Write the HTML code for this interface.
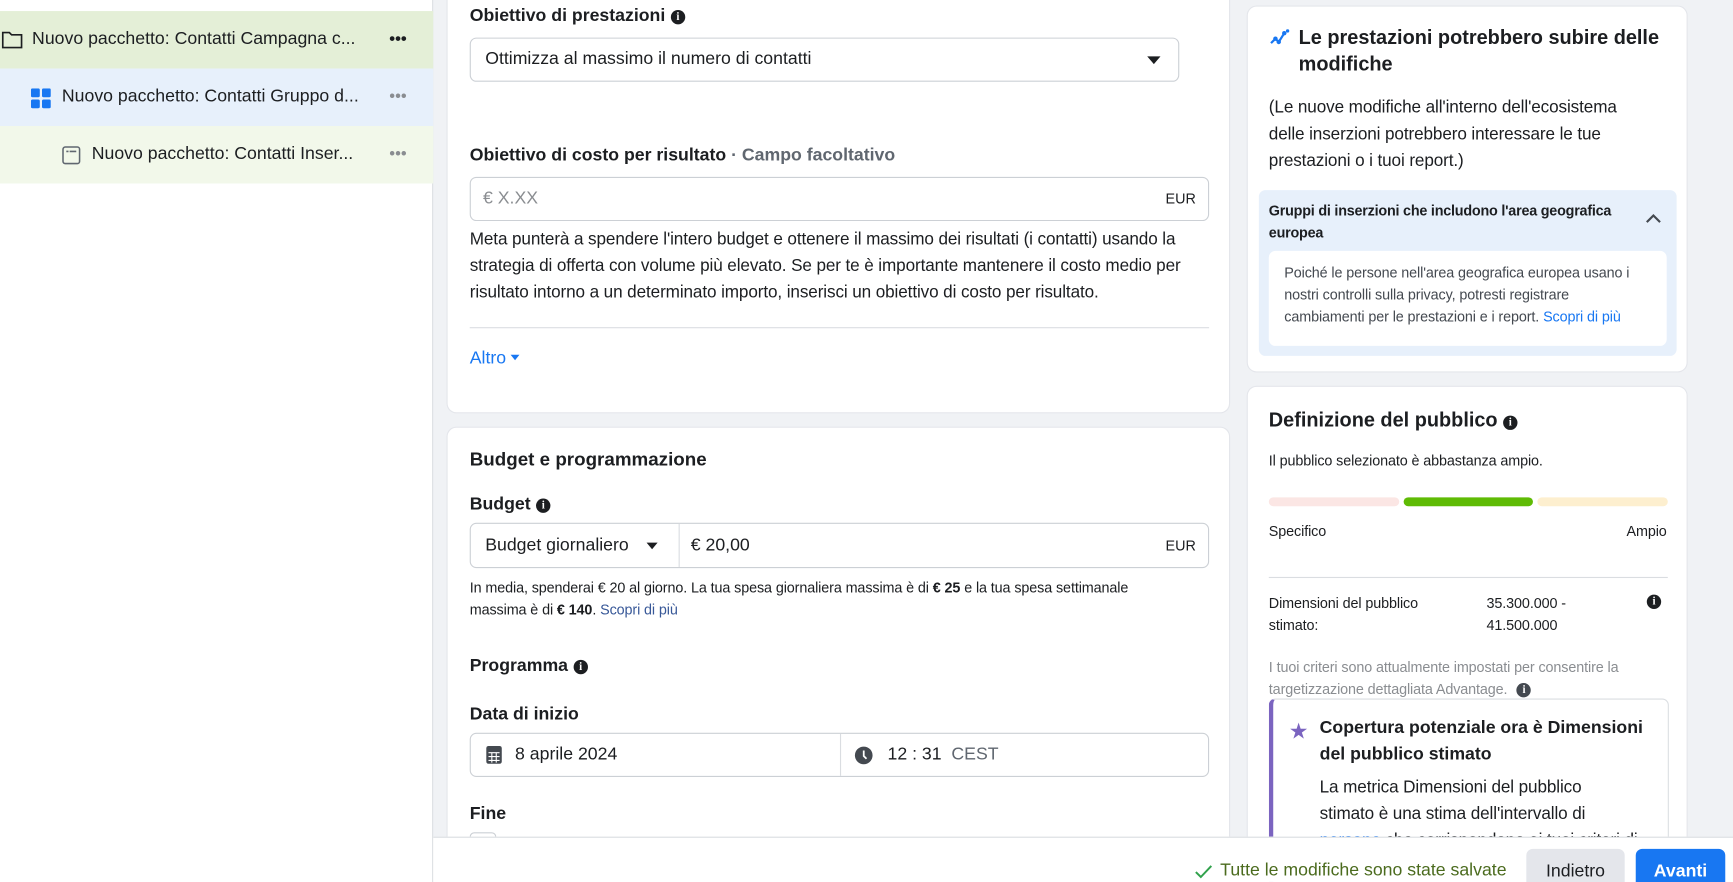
<!DOCTYPE html>
<html><head><meta charset="utf-8"><style>
*{box-sizing:border-box;margin:0;padding:0}
html,body{width:1733px;height:882px;overflow:hidden}
body{background:#f0f2f5;font-family:"Liberation Sans",sans-serif;color:#1c1e21;position:relative}
#w{position:absolute;left:0;top:0;width:1568px;height:798px;overflow:hidden;transform:scale(1.10523);transform-origin:0 0}
.a{position:absolute}
.side{left:0;top:0;width:392px;height:798px;background:#fff;border-right:1px solid #dadde1}
.row{position:absolute;left:0;width:392px;height:52px;font-size:16px;color:#1c1e21;line-height:52px;white-space:nowrap}
.dots{position:absolute;right:24px;top:0;font-size:15px;letter-spacing:0;color:#8a8d91}
.card{position:absolute;background:#fff;border-radius:8px;box-shadow:0 0 0 1px #e4e6eb}
.lbl{position:absolute;font-size:16px;font-weight:bold;color:#1c1e21}
.info{display:inline-block;width:13px;height:13px;border-radius:50%;background:#1c1e21;color:#fff;font-size:10px;line-height:13px;text-align:center;font-weight:bold;vertical-align:1px;margin-left:5px;font-family:"Liberation Serif",serif}
.inp{position:absolute;border:1px solid #ccd0d5;border-radius:6px;background:#fff;font-size:16px;color:#1c1e21}
.p{position:absolute;font-size:15.5px;line-height:24px;color:#1c1e21;letter-spacing:-0.1px}
.s{position:absolute;font-size:13px;line-height:20px;color:#1c1e21;letter-spacing:-0.1px}
.link{color:#385898}
.tri{display:inline-block;width:0;height:0;border-left:6px solid transparent;border-right:6px solid transparent;border-top:7px solid #1c1e21}
</style></head><body><div id="w">
<div class="a side">
 <div class="row" style="top:10px;background:#e4efd7">
  <svg class="a" style="left:1px;top:17px" width="20" height="18" viewBox="0 0 20 18"><path d="M1.5 2.5h6l2 2h9v11.5h-17z" fill="none" stroke="#1c1e21" stroke-width="1.5"/></svg>
  <span class="a" style="left:29px">Nuovo pacchetto: Contatti Campagna c...</span><span class="dots" style="color:#1c1e21;font-weight:bold">•••</span></div>
 <div class="row" style="top:62px;background:#e7f0fb">
  <svg class="a" style="left:28px;top:18px" width="18" height="18"><rect x="0" y="0" width="8" height="8" rx="1.5" fill="#1877f2"/><rect x="10" y="0" width="8" height="8" rx="1.5" fill="#1877f2"/><rect x="0" y="10" width="8" height="8" rx="1.5" fill="#1877f2"/><rect x="10" y="10" width="8" height="8" rx="1.5" fill="#1877f2"/></svg>
  <span class="a" style="left:56px">Nuovo pacchetto: Contatti Gruppo d...</span><span class="dots">•••</span></div>
 <div class="row" style="top:114px;background:#f2f8ea">
  <svg class="a" style="left:56px;top:18px" width="17" height="17"><rect x="1" y="1" width="15" height="15" rx="2" fill="none" stroke="#606770" stroke-width="1.4"/><path d="M4 5h2M7 5h6" stroke="#606770" stroke-width="1.4"/></svg>
  <span class="a" style="left:83px">Nuovo pacchetto: Contatti Inser...</span><span class="dots">•••</span></div>
</div>

<div class="card" style="left:405px;top:-10px;width:707px;height:383px">
 <div class="lbl" style="left:20px;top:16px">Obiettivo di prestazioni<span class="info">i</span></div>
 <div class="inp" style="left:20px;top:44px;width:642px;height:40px;line-height:38px;padding-left:13px">Ottimizza al massimo il numero di contatti<span class="tri a" style="right:16px;top:16px"></span></div>
 <div class="lbl" style="left:20px;top:142px">Obiettivo di costo per risultato <span style="color:#606770">· Campo facoltativo</span></div>
 <div class="inp" style="left:20px;top:170px;width:669px;height:40px;line-height:38px;padding-left:11px;color:#8a8d91">€ X.XX<span class="a" style="right:11px;font-size:13px;color:#1c1e21">EUR</span></div>
 <div class="p" style="left:20px;top:215px;width:672px">Meta punterà a spendere l'intero budget e ottenere il massimo dei risultati (i contatti) usando la strategia di offerta con volume più elevato. Se per te è importante mantenere il costo medio per risultato intorno a un determinato importo, inserisci un obiettivo di costo per risultato.</div>
 <div class="a" style="left:20px;top:306px;width:669px;height:1px;background:#dadde1"></div>
 <div class="a" style="left:20px;top:326px;font-size:16px;color:#1877f2">Altro <span class="tri" style="border-top-color:#1877f2;border-left-width:4px;border-right-width:4px;border-top-width:5px;vertical-align:3px"></span></div>
</div>

<div class="card" style="left:405px;top:387px;width:707px;height:420px">
 <div class="a" style="left:20px;top:19px;font-size:17px;font-weight:bold">Budget e programmazione</div>
 <div class="lbl" style="left:20px;top:61px">Budget<span class="info">i</span></div>
 <div class="inp" style="left:20px;top:86px;width:669px;height:41px;line-height:39px">
  <span class="a" style="left:13px">Budget giornaliero</span><span class="tri a" style="left:159px;top:17px;border-left-width:5px;border-right-width:5px;border-top-width:6px"></span>
  <span class="a" style="left:188px;top:0;width:1px;height:39px;background:#dadde1"></span>
  <span class="a" style="left:199px">€ 20,00</span><span class="a" style="right:11px;font-size:13px">EUR</span></div>
 <div class="s" style="left:20px;top:135px;width:640px">In media, spenderai € 20 al giorno. La tua spesa giornaliera massima è di <b>€ 25</b> e la tua spesa settimanale massima è di <b>€ 140</b>. <span class="link">Scopri di più</span></div>
 <div class="lbl" style="left:20px;top:207px">Programma<span class="info">i</span></div>
 <div class="lbl" style="left:20px;top:251px">Data di inizio</div>
 <div class="inp" style="left:20px;top:276px;width:669px;height:40px;line-height:38px">
  <svg class="a" style="left:13px;top:10px" width="16" height="18"><rect x="1" y="1" width="14" height="16" rx="2" fill="#444950"/><path d="M3 7h10M3 10.5h10M3 14h10M6 7v9M10 7v9" stroke="#fff" stroke-width="1"/></svg>
  <span class="a" style="left:40px">8 aprile 2024</span>
  <span class="a" style="left:334px;top:0;width:1px;height:38px;background:#dadde1"></span>
  <svg class="a" style="left:347px;top:11px" width="17" height="17"><circle cx="8.5" cy="8.5" r="8" fill="#444950"/><path d="M8.5 4v5l2.5 2.5" stroke="#fff" stroke-width="1.6" fill="none"/></svg>
  <span class="a" style="left:377px">12 : 31 &nbsp;<span style="color:#606770">CEST</span></span></div>
 <div class="lbl" style="left:20px;top:341px">Fine</div>
 <div class="a" style="left:20px;top:366px;width:24px;height:24px;border:1px solid #ccd0d5;border-radius:4px"></div>
</div>

<div class="card" style="left:1129px;top:6px;width:397px;height:330px">
 <svg class="a" style="left:20px;top:20px" width="18" height="16" viewBox="0 0 18 16"><path d="M1 13l4-4 3 3 5-8" stroke="#1877f2" stroke-width="2" fill="none"/><circle cx="5" cy="9" r="2" fill="#1877f2"/><circle cx="8" cy="12" r="2" fill="#1877f2"/><circle cx="13" cy="4" r="2" fill="#1877f2"/><circle cx="16" cy="2" r="1.5" fill="#1877f2"/></svg>
 <div class="a" style="left:46px;top:16px;width:340px;font-size:18px;font-weight:bold;line-height:24px">Le prestazioni potrebbero subire delle modifiche</div>
 <div class="p" style="left:19px;top:80px;width:335px">(Le nuove modifiche all'interno dell'ecosistema delle inserzioni potrebbero interessare le tue prestazioni o i tuoi report.)</div>
 <div class="a" style="left:10px;top:166px;width:378px;height:150px;background:#e7f0fb;border-radius:6px">
  <div class="a" style="left:9px;top:9px;width:345px;font-size:13px;font-weight:bold;line-height:20px;letter-spacing:-0.2px">Gruppi di inserzioni che includono l'area geografica europea</div>
  <svg class="a" style="left:350px;top:21px" width="14" height="9"><path d="M1 8l6-6 6 6" stroke="#444950" stroke-width="2" fill="none"/></svg>
  <div class="a" style="left:9px;top:55px;width:360px;height:86px;background:#fff;border-radius:6px">
   <div class="s" style="left:14px;top:10px;width:330px;color:#444950">Poiché le persone nell'area geografica europea usano i nostri controlli sulla privacy, potresti registrare cambiamenti per le prestazioni e i report. <span style="color:#1877f2">Scopri di più</span></div>
  </div>
 </div>
</div>

<div class="card" style="left:1129px;top:350px;width:397px;height:480px">
 <div class="a" style="left:19px;top:20px;font-size:18px;font-weight:bold">Definizione del pubblico<span class="info">i</span></div>
 <div class="s" style="left:19px;top:57px;color:#1c1e21">Il pubblico selezionato è abbastanza ampio.</div>
 <div class="a" style="left:19px;top:100px;width:118px;height:8px;border-radius:4px;background:#fbe6e4"></div>
 <div class="a" style="left:141px;top:100px;width:117px;height:8px;border-radius:4px;background:#5fbb05"></div>
 <div class="a" style="left:262px;top:100px;width:118px;height:8px;border-radius:4px;background:#fdefcf"></div>
 <div class="s" style="left:19px;top:121px">Specifico</div>
 <div class="s" style="right:18px;top:121px">Ampio</div>
 <div class="a" style="left:19px;top:172px;width:361px;height:1px;background:#dadde1"></div>
 <div class="s" style="left:19px;top:186px;width:170px">Dimensioni del pubblico stimato:</div>
 <div class="s" style="left:216px;top:186px;width:120px">35.300.000 - 41.500.000</div>
 <span class="info a" style="left:356px;top:188px">i</span>
 <div class="s" style="left:19px;top:244px;width:370px;color:#8a8d91">I tuoi criteri sono attualmente impostati per consentire la targetizzazione dettagliata Advantage. <span class="info" style="background:#444950">i</span></div>
 <div class="a" style="left:19px;top:282px;width:362px;height:200px;border:1px solid #dadde1;border-left:4px solid #7b64c0;border-radius:6px">
  <div class="a" style="left:14px;top:16px;font-size:20px;color:#7b64c0">★</div>
  <div class="a" style="left:42px;top:14px;width:310px;font-size:16px;font-weight:bold;line-height:24px">Copertura potenziale ora è Dimensioni del pubblico stimato</div>
  <div class="p" style="left:42px;top:68px;width:290px">La metrica Dimensioni del pubblico stimato è una stima dell'intervallo di <span style="color:#1877f2">persone</span> che corrispondono ai tuoi criteri di</div>
 </div>
</div>

<div class="a" style="left:392px;top:757px;width:1176px;height:41px;background:#fff;border-top:1px solid #dadde1;overflow:hidden">
 <svg class="a" style="left:689px;top:24px" width="16" height="13"><path d="M1 7l4.5 4.5L15 1.5" stroke="#31a24c" stroke-width="1.8" fill="none"/></svg>
 <div class="a" style="left:712px;top:21px;font-size:16px;color:#4b6b1e">Tutte le modifiche sono state salvate</div>
 <div class="a" style="left:989px;top:10px;width:89px;height:44px;background:#e4e6eb;border-radius:6px;font-size:16px;line-height:42px;text-align:center">Indietro</div>
 <div class="a" style="left:1088px;top:10px;width:81px;height:44px;background:#1877f2;border-radius:6px;font-size:16px;font-weight:bold;color:#fff;line-height:42px;text-align:center">Avanti</div>
</div>
</div></body></html>
